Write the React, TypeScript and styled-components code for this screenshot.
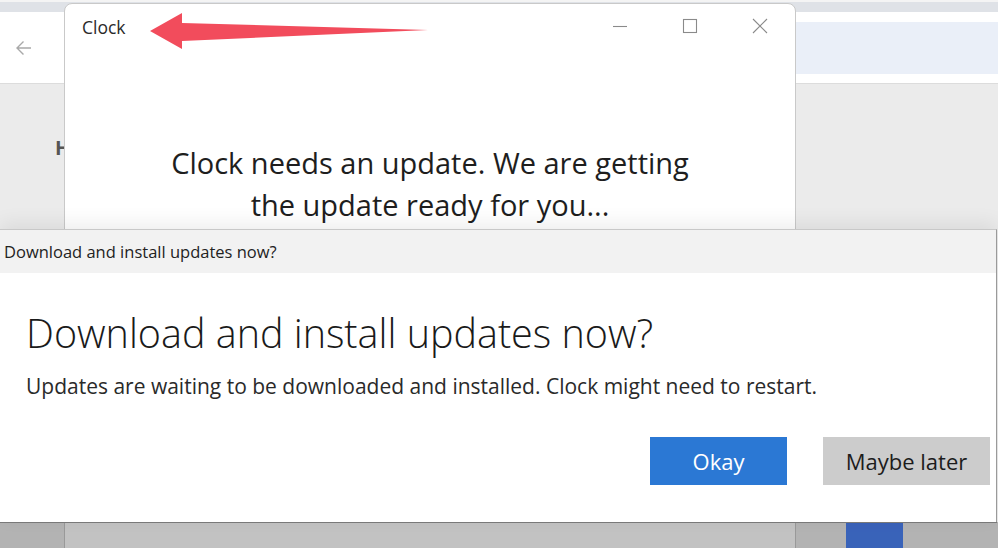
import React from 'react';
import styled, { createGlobalStyle } from 'styled-components';

const GlobalStyle = createGlobalStyle`
  html, body {
    margin: 0;
    padding: 0;
    background: #ffffff;
  }
  body {
    font-family: "Open Sans", "Noto Sans", "Liberation Sans", sans-serif;
    color: #1f1f1f;
  }
`;

const Desktop = styled.div`
  position: relative;
  width: 998px;
  height: 548px;
  overflow: hidden;
  background: #ffffff;
`;

/* ---------- app behind everything ---------- */

const BgApp = styled.div`
  position: absolute;
  inset: 0;
  display: flex;
  flex-direction: column;
`;

const BgTopBand = styled.div`
  height: 12px;
  background: #dfe2e7;
  border-top: 2px solid #f4f4f4;
  box-sizing: border-box;
`;

const BgHeader = styled.div`
  height: 71px;
  display: flex;
  align-items: center;
  background: #ffffff;
  border-bottom: 1px solid #dcdcdc;
`;

const BackButton = styled.div`
  width: 48px;
  height: 48px;
  display: flex;
  align-items: center;
  justify-content: center;
  color: #a9a9a9;
`;

const SearchBar = styled.div`
  flex: 1;
  height: 52px;
  margin-left: 180px;
  background: #eaeff8;
`;

const BgContent = styled.div`
  flex: 1;
  display: flex;
  flex-direction: column;
  background: #ebebeb;
  padding: 50px 0 0 55px;
`;

const BgHeading = styled.div`
  font-family: "Open Sans", "Noto Sans", sans-serif;
  font-size: 20px;
  font-weight: 700;
  color: #555555;
`;

const BgFooter = styled.div`
  margin-top: auto;
  display: flex;
  justify-content: flex-end;
  padding-right: 95px;
`;

const BgBlueButton = styled.div`
  width: 57px;
  height: 26px;
  background: #4c82f4;
`;

/* ---------- clock window ---------- */

const ClockWindow = styled.div`
  position: absolute;
  left: 64px;
  top: 3px;
  width: 732px;
  height: 560px;
  box-sizing: border-box;
  background: #ffffff;
  border: 1px solid #c9c9c9;
  border-radius: 8px 8px 0 0;
  display: flex;
  flex-direction: column;
`;

const TitleBar = styled.div`
  height: 48px;
  display: flex;
  align-items: center;
  padding-left: 17px;
`;

const WindowTitle = styled.div`
  flex: 1;
  font-size: 17.5px;
  color: #2a2a2a;
  margin-top: -3px;
`;

const CaptionButton = styled.div`
  width: 70px;
  height: 48px;
  display: flex;
  align-items: center;
  justify-content: center;
  color: #8a8a8a;
  margin-top: -4px;
`;

const UpdateMessage = styled.div`
  margin-top: 90px;
  text-align: center;
  font-size: 29px;
  line-height: 42px;
  color: #1e1e1e;
`;

const Annotation = styled.svg`
  position: absolute;
  left: 0;
  top: 0;
  pointer-events: none;
`;

/* ---------- modal dialog ---------- */

const Dialog = styled.div`
  position: absolute;
  left: 0;
  top: 229px;
  width: 997px;
  height: 294px;
  box-sizing: border-box;
  background: #ffffff;
  border-top: 1px solid #c8c8c8;
  border-right: 1px solid #9a9a9a;
  border-bottom: 1px solid #a0a0a0;
  box-shadow: 0 -6px 18px rgba(0, 0, 0, 0.07);
  display: flex;
  flex-direction: column;
`;

const DialogCaption = styled.div`
  height: 43px;
  display: flex;
  align-items: center;
  padding-left: 4px;
  background: #f2f2f2;
  font-size: 16.5px;
  color: #222222;
`;

const DialogBody = styled.div`
  flex: 1;
  display: flex;
  flex-direction: column;
  padding: 35px 0 0 26px;
`;

const DialogHeading = styled.div`
  font-size: 39.5px;
  font-weight: 300;
  line-height: 50px;
  color: #1a1a1a;
`;

const DialogText = styled.div`
  margin-top: 14px;
  font-size: 21px;
  line-height: 28px;
  color: #2a2a2a;
`;

const ButtonRow = styled.div`
  display: flex;
  gap: 36px;
  margin-top: 37px;
  padding-left: 624px;
`;

const DialogButton = styled.div<{ $primary?: boolean; $width: number }>`
  width: ${p => p.$width}px;
  height: 48px;
  display: flex;
  align-items: center;
  justify-content: center;
  font-size: 22px;
  background: ${p => (p.$primary ? '#2b78d4' : '#cccccc')};
  color: ${p => (p.$primary ? '#ffffff' : '#1c1c1c')};
`;

const Scrim = styled.div`
  position: absolute;
  left: 0;
  right: 0;
  top: 522px;
  bottom: 0;
  background: rgba(0, 0, 0, 0.24);
`;

export default function App() {
  return (
    <>
      <GlobalStyle />
      <Desktop>
        <BgApp>
          <BgTopBand />
          <BgHeader>
            <BackButton>
              <svg width="18" height="18" viewBox="0 0 18 18" fill="none" stroke="currentColor" strokeWidth="1.4">
                <path d="M16 9H2M8.5 2.5L2 9l6.5 6.5" />
              </svg>
            </BackButton>
            <SearchBar />
          </BgHeader>
          <BgContent>
            <BgHeading>H</BgHeading>
            <BgFooter>
              <BgBlueButton />
            </BgFooter>
          </BgContent>
        </BgApp>

        <ClockWindow>
          <TitleBar>
            <WindowTitle>Clock</WindowTitle>
            <CaptionButton>
              <svg width="16" height="16" viewBox="0 0 16 16" stroke="currentColor" strokeWidth="1.1">
                <path d="M1 8.5h14" />
              </svg>
            </CaptionButton>
            <CaptionButton>
              <svg width="16" height="16" viewBox="0 0 16 16" fill="none" stroke="currentColor" strokeWidth="1.1">
                <rect x="1.5" y="1.5" width="13" height="13" />
              </svg>
            </CaptionButton>
            <CaptionButton>
              <svg width="16" height="16" viewBox="0 0 16 16" stroke="currentColor" strokeWidth="1.1">
                <path d="M1 1l14 14M15 1L1 15" />
              </svg>
            </CaptionButton>
          </TitleBar>
          <UpdateMessage>
            Clock needs an update. We are getting
            <br />
            the update ready for you...
          </UpdateMessage>
        </ClockWindow>

        <Annotation width="998" height="60" viewBox="0 0 998 60">
          <polygon
            points="150,31 182,13 182,23 428,30 182,41 182,49"
            fill="#f24c5c"
          />
        </Annotation>

        <Dialog>
          <DialogCaption>Download and install updates now?</DialogCaption>
          <DialogBody>
            <DialogHeading>Download and install updates now?</DialogHeading>
            <DialogText>
              Updates are waiting to be downloaded and installed. Clock might need to restart.
            </DialogText>
            <ButtonRow>
              <DialogButton $primary $width={137}>Okay</DialogButton>
              <DialogButton $width={167}>Maybe later</DialogButton>
            </ButtonRow>
          </DialogBody>
        </Dialog>

        <Scrim />
      </Desktop>
    </>
  );
}
